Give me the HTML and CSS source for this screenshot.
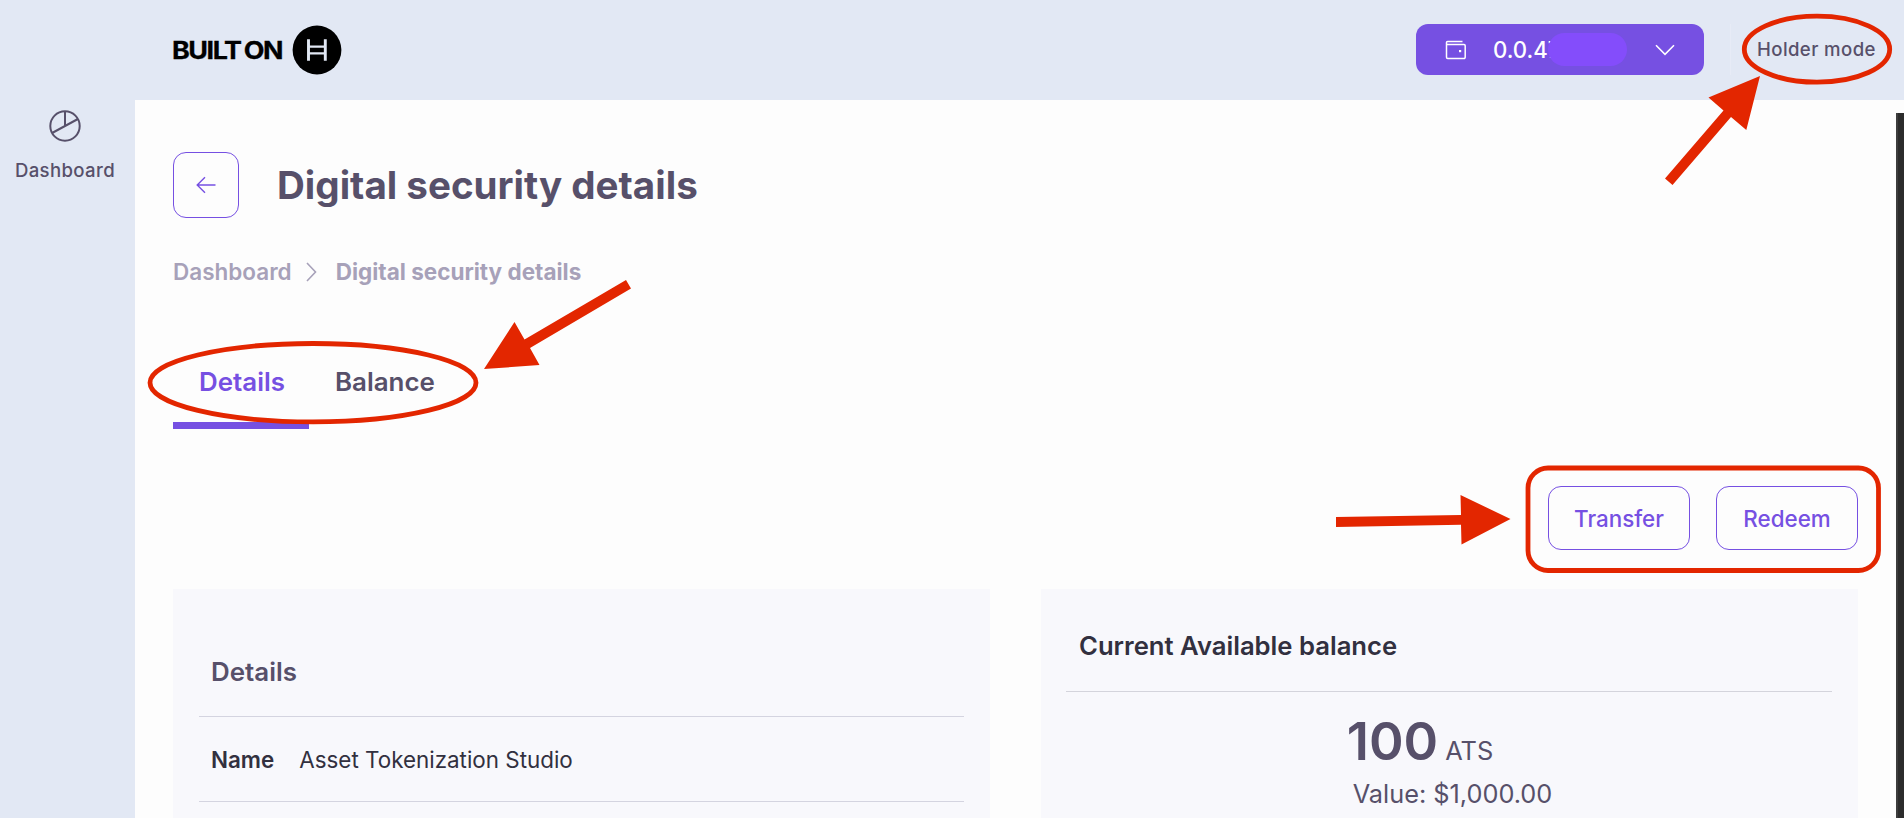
FILE: index.html
```html
<!DOCTYPE html>
<html lang="en">
<head>
<meta charset="utf-8">
<title>Digital security details</title>
<link rel="stylesheet" href="styles.css">
</head>
<body>
<div class="app">
  <aside class="sidebar">
    <a class="nav-item">
      <svg class="nav-icon" width="32" height="32" viewBox="0 0 32 32"><circle cx="16" cy="16" r="14.7"/><path d="M16 1.3V16M3.1 23 28.9 9"/></svg>
      <span>Dashboard</span>
    </a>
  </aside>
  <div class="column">
    <header class="topbar">
      <div class="logo">
        <div class="logo-text"><span>BUILT</span><span>ON</span></div>
        <svg class="logo-mark" width="50" height="50" viewBox="0 0 50 50"><circle cx="25" cy="25" r="24.4" fill="#000"/><path d="M16.5 14.2v21.5M33.3 14.2v21.5" stroke="#e2e8f4" stroke-width="2.9"/><path d="M16.5 21.6h16.8M16.5 28.4h16.8" stroke="#e2e8f4" stroke-width="2.3"/></svg>
      </div>
      <div class="topbar-right">
        <button class="account">
          <svg width="22" height="20" viewBox="0 0 22 20"><path d="M17.5 1.500H2.500q-1 0-1 1v14.800a1.200 1.200 0 0 0 1.200 1.200H19a1.200 1.200 0 0 0 1.200-1.200V5.700A1.200 1.200 0 0 0 19 4.500H1.500" fill="none" stroke="#fff" stroke-width="1.500"/><rect x="14" y="10" width="2.200" height="2.200" fill="#fff"/></svg>
          <span class="account-id">0.0.47<i class="mask"></i></span>
          <svg class="chevron" width="20" height="12" viewBox="0 0 20 12"><path d="M1 1.300 10 10.300 19 1.300" fill="none" stroke="#fff" stroke-width="1.600"/></svg>
        </button>
        <span class="divider"></span>
        <span class="mode">Holder mode</span>
      </div>
    </header>
    <main class="content">
      <div class="title-row">
        <button class="back"><svg width="20" height="18" viewBox="0 0 20 18"><path d="M19.500 9H1.200M9 1.200 1.200 9 9 16.800" fill="none" stroke="#7650e2" stroke-width="1.400"/></svg></button>
        <h1>Digital security details</h1>
      </div>
      <nav class="crumbs">
        <span class="crumb">Dashboard</span>
        <svg width="11" height="20" viewBox="0 0 11 20"><path d="M1 1 9.500 10 1 19" fill="none" stroke="#a7a1b9" stroke-width="1.600"/></svg>
        <span class="crumb current">Digital security details</span>
      </nav>
      <div class="tabs">
        <span class="tab active">Details</span>
        <span class="tab">Balance</span>
      </div>
      <div class="actions">
        <button class="btn">Transfer</button>
        <button class="btn">Redeem</button>
      </div>
      <div class="panels">
        <section class="panel details">
          <h2>Details</h2>
          <div class="row"><b>Name</b><span>Asset Tokenization Studio</span></div>
        </section>
        <section class="panel balance">
          <h2>Current Available balance</h2>
          <div class="amount"><strong>100</strong><span>ATS</span></div>
          <div class="value">Value: $1,000.00</div>
        </section>
      </div>
    </main>
  </div>
  <div class="scrollbar"></div>
  <svg class="annotations" width="1904" height="818" viewBox="0 0 1904 818">
    <g fill="none" stroke="#e32600" stroke-width="4.800">
      <ellipse cx="1817" cy="49.200" rx="72.700" ry="33"/>
      <ellipse cx="313" cy="382.700" rx="163" ry="39.200"/>
      <rect x="1528" y="468" width="350.500" height="102.500" rx="20"/>
    </g>
    <g fill="#e32600">
      <path d="M1665 178.500 1723.500 110.500 1708.500 97.500 1760 76 1746.300 130 1731 117 1672.500 185z"/>
      <path d="M626 280 524.500 339.500 514.500 322 484 369 539.500 365 530 348 631 288.500z"/>
      <path d="M1336 517 1461 515 1460.500 495 1510.500 519 1461.500 544.500 1461 524.700 1336 527z"/>
    </g>
  </svg>
</div>
</body>
</html>
```
FILE: styles.css
```css
* { box-sizing: border-box; }
body { margin: 0; font-family: Inter, "Liberation Sans", sans-serif; color: #57506a; }
button { font: inherit; padding: 0; }
h1, h2 { margin: 0; }
svg { display: block; flex: none; }
.app { position: relative; display: flex; width: 1904px; height: 818px; overflow: hidden; background: #e2e8f4; }

.sidebar { width: 135px; flex: none; padding-top: 110px; }
.nav-item { display: flex; flex-direction: column; align-items: center; gap: 16px; padding-right: 5px; font-size: 18.600px; font-weight: 500; letter-spacing: 0.350px; line-height: 25px; }
.nav-icon { fill: none; stroke: #57506a; stroke-width: 2; }

.column { flex: 1; display: flex; flex-direction: column; }
.topbar { height: 100px; flex: none; display: flex; justify-content: space-between; align-items: center; padding-left: 37px; }
.logo { display: flex; align-items: center; }
.logo-text { width: 120px; padding-top: 1px; display: flex; gap: 3px; transform: scaleX(1.120); transform-origin: left; color: #000; font-size: 24px; font-weight: 700; letter-spacing: -1.300px; line-height: 30px; -webkit-text-stroke: 0.300px #000; }
.topbar-right { display: flex; align-items: center; padding-right: 28px; margin-top: -1px; }
.account { width: 288px; height: 51px; border: 0; border-radius: 12px; background: #7650e2; color: #fff; display: flex; align-items: center; padding: 0 29px; font-size: 22.200px; font-weight: 500; }
.account-id { position: relative; margin-left: 26px; line-height: 33px; }
.mask { position: absolute; left: 55px; top: 0; width: 79px; height: 33px; border-radius: 17px; background: #844dfb; }
.chevron { margin-left: auto; }
.divider { width: 1px; height: 51px; margin-left: 26px; background: #e7ebf6; }
.mode { margin: -2px 0 0 26px; width: 119px; white-space: nowrap; font-size: 18.600px; font-weight: 500; letter-spacing: 0.400px; line-height: 24px; }

.content { flex: 1; background: #fdfdfd; padding: 52px 46px 0 38px; }
.title-row { display: flex; align-items: center; gap: 38px; }
.back { width: 66px; height: 66px; border: 1px solid #7650e2; border-radius: 13px; background: none; display: flex; align-items: center; justify-content: center; }
h1 { font-size: 38.550px; line-height: 48px; font-weight: 700; }
.crumbs { display: flex; align-items: center; margin-top: 38px; height: 32px; font-size: 22.500px; line-height: 32px; color: #a7a1b9; }
.crumb { font-weight: 600; margin-right: 14px; }
.crumb.current { font-weight: 700; margin: 0 0 0 19px; }
.tabs { display: flex; height: 89px; margin-top: 52px; }
.tab { font-size: 25.900px; font-weight: 600; line-height: 84px; padding: 0 26px; height: 89px; }
.tab.active { color: #7650e2; border-bottom: 7px solid #7650e2; width: 136px; }
.actions { display: flex; justify-content: flex-end; gap: 26px; margin-top: 57px; }
.btn { width: 142px; height: 64px; border: 1px solid #7650e2; border-radius: 13px; background: none; color: #7650e2; font-size: 22.400px; font-weight: 500; }
.panels { display: grid; grid-template-columns: 817px 817px; gap: 51px; margin-top: 39px; }
.panel { height: 229px; background: #f8f8fc; }
.panel h2 { font-size: 25.900px; font-weight: 600; line-height: 32px; }
.details { padding: 67px 26px 0; }
.details h2 { padding: 0 12px; height: 61px; border-bottom: 1px solid #d4d4e0; }
.row { display: flex; gap: 25px; padding: 0 12px; height: 85px; border-bottom: 1px solid #d4d4e0; font-size: 22.400px; line-height: 85px; color: #32303f; }
.row b { font-weight: 600; }
.balance { padding: 41px 26px 0 25px; }
.balance h2 { height: 62px; padding-left: 13px; border-bottom: 1px solid #d4d4dc; font-size: 25.650px; color: #32303f; }
.amount { display: flex; justify-content: center; align-items: baseline; gap: 7px; height: 64px; margin-top: 17px; padding-right: 58px; line-height: 64px; font-size: 25.400px; }
.amount strong { font-size: 52.500px; font-weight: 600; }
.value { margin-top: 5px; text-align: center; padding-left: 7px; font-size: 25.300px; line-height: 32px; }

.scrollbar { position: absolute; right: 0; top: 113px; width: 8px; height: 705px; background: #2c2c2c; border-left: 2px solid #3d3d3d; }
.annotations { position: absolute; left: 0; top: 0; }
```
